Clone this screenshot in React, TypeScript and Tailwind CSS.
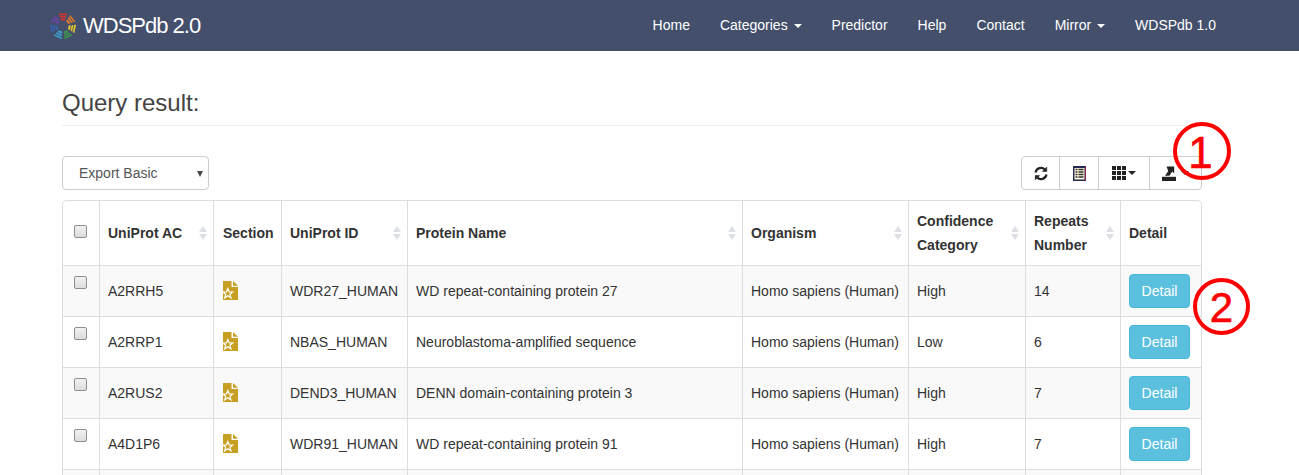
import React from "react";

const rows = [
  { ac: "A2RRH5", id: "WDR27_HUMAN", name: "WD repeat-containing protein 27", conf: "High", rep: "14" },
  { ac: "A2RRP1", id: "NBAS_HUMAN", name: "Neuroblastoma-amplified sequence", conf: "Low", rep: "6" },
  { ac: "A2RUS2", id: "DEND3_HUMAN", name: "DENN domain-containing protein 3", conf: "High", rep: "7" },
  { ac: "A4D1P6", id: "WDR91_HUMAN", name: "WD repeat-containing protein 91", conf: "High", rep: "7" },
];

const Caret = () => (
  <span className="ml-[2px] inline-block align-middle w-0 h-0 border-x-4 border-x-transparent border-t-4 border-t-current" />
);

const Logo = () => {
  const colors = ["#d9342b", "#e0782a", "#e8c62e", "#3f9a4b", "#3c9fd0", "#3a62b0", "#6a45a5"];
  return (
    <svg width="28" height="28" viewBox="-14 -14 28 28" className="mr-[6px]">
      {colors.map((c, i) => (
        <g key={c} transform={`rotate(${(i * 360) / 7})`} fill={c}>
          <path d="M-4.5 -12.5 H4.5 L3.6 -10.8 H-3.6 Z" />
          <path d="M-3.4 -10 H3.4 L2.8 -8.4 H-2.8 Z" />
          <path d="M-2.5 -7.6 H2.5 L1.8 -5.5 H-1.8 Z" />
        </g>
      ))}
    </svg>
  );
};

const SortIcon = () => (
  <span className="absolute right-[6px] top-1/2 -translate-y-1/2 flex flex-col gap-[2px]">
    <span className="w-0 h-0 border-x-[4.5px] border-x-transparent border-b-[6px] border-b-[#dcdfe3]" />
    <span className="w-0 h-0 border-x-[4.5px] border-x-transparent border-t-[6px] border-t-[#dcdfe3]" />
  </span>
);

const SectionIcon = () => (
  <svg width="15" height="19" viewBox="0 0 15 19" className="ml-px -mt-px block">
    <path d="M0 0H8.5V6H15V19H0Z" fill="#c79f23" />
    <path d="M10 0L15 4.8H10Z" fill="#c79f23" />
    <path
      d="M4.8 7.5L6.2 11H9.6L6.9 13.2L7.9 16.8L4.8 14.8L1.7 16.8L2.7 13.2L0 11H3.4Z"
      fill="#c79f23"
      stroke="#ffffff"
      strokeWidth="1.2"
    />
  </svg>
);

const Checkbox = () => (
  <span className="ml-[3px] block w-[13px] h-[13px] rounded-[2px] border border-[#8e8e8e] bg-gradient-to-b from-[#f2f2f2] to-[#dcdcdc]" />
);

const th = "relative border border-[#dddddd] px-2 py-2 text-left align-middle font-bold leading-[24px]";
const td = "border border-[#dddddd] px-2 align-middle";

export default function App() {
  return (
    <div className="relative h-[475px] w-[1299px] overflow-hidden bg-white font-['Liberation_Sans',Arial,sans-serif] text-[14px] text-[#333333]">
      <nav className="flex h-[51px] items-center justify-between bg-[#434f6b] pl-[49px] pr-[83px] text-white">
        <div className="flex items-center">
          <Logo />
          <span className="text-[22px] tracking-[-1px]">WDSPdb 2.0</span>
        </div>
        <ul className="flex gap-[30px]">
          <li>Home</li>
          <li>Categories <Caret /></li>
          <li>Predictor</li>
          <li>Help</li>
          <li>Contact</li>
          <li>Mirror <Caret /></li>
          <li>WDSPdb 1.0</li>
        </ul>
      </nav>

      <main className="mx-[62px] w-[1140px]">
        <h1 className="mt-[39px] border-b border-[#eeeeee] pb-[9px] text-[24px] leading-[26px] text-[#444444]">Query result:</h1>

        <div className="mt-[30px] flex items-center justify-between">
          <div className="relative flex h-[34px] w-[147px] items-center rounded border border-[#cccccc] pl-4 text-[#555555]">
            Export Basic
            <span className="absolute right-[5px] top-[14px] w-0 h-0 border-x-[3.5px] border-x-transparent border-t-[6px] border-t-[#444444]" />
          </div>
          <div className="flex h-[34px] divide-x divide-[#cccccc] rounded border border-[#cccccc] text-[#222222]">
            <div className="flex w-[38px] items-center justify-center">
              <svg width="14" height="15" viewBox="0 0 14 14" fill="none" stroke="currentColor" strokeWidth="2.2">
                <path d="M1.5 6A5.5 5.5 0 0 1 11 3.2" />
                <path d="M12.5 8A5.5 5.5 0 0 1 3 10.8" />
                <path d="M12.8 0.5V5H8.3Z" fill="currentColor" strokeWidth="0.5" />
                <path d="M1.2 13.5V9H5.7Z" fill="currentColor" strokeWidth="0.5" />
              </svg>
            </div>
            <div className="flex w-[39px] items-center justify-center">
              <svg width="13" height="15" viewBox="0 0 13 15">
                <rect x="0" y="0" width="13" height="15" fill="#8a2045" />
                <rect x="0" y="0" width="12" height="15" fill="#232b55" />
                <rect x="1.5" y="2" width="10" height="11.5" fill="#fdf6dc" />
                <path d="M2.5 3.5H4.5M5.5 3.5H10.5M2.5 6H4.5M5.5 6H10.5M2.5 8.5H4.5M5.5 8.5H10.5M2.5 11H4.5M5.5 11H10.5" stroke="#333" strokeWidth="1.4" />
              </svg>
            </div>
            <div className="flex w-[51px] items-center justify-center">
              <svg width="14" height="14" viewBox="0 0 14 14" fill="currentColor">
                <path d="M0 0h4v4H0zM5 0h4v4H5zM10 0h4v4h-4zM0 5h4v4H0zM5 5h4v4H5zM10 5h4v4h-4zM0 10h4v4H0zM5 10h4v4H5zM10 10h4v4h-4z" />
              </svg>
              <Caret />
            </div>
            <div className="flex w-[51px] items-center justify-center gap-[3px]">
              <svg width="14" height="15" viewBox="0 0 14 15" fill="currentColor">
                <path d="M0 10.8H14V15H0Z" />
                <path d="M3 9.8L6.2 5.2L4.6 0.6H12.2V7.4L10.2 5.6L7.4 9.8Z" />
              </svg>
              <Caret />
            </div>
          </div>
        </div>

        <div className="mt-[10px] overflow-hidden rounded border border-[#dddddd]">
          <table className="w-[1140px] table-fixed border-collapse -m-px">
            <colgroup>
              <col className="w-[37px]" />
              <col className="w-[114px]" />
              <col className="w-[68px]" />
              <col className="w-[126px]" />
              <col className="w-[335px]" />
              <col className="w-[166px]" />
              <col className="w-[117px]" />
              <col className="w-[95px]" />
              <col className="w-[82px]" />
            </colgroup>
            <thead>
              <tr className="h-[65px]">
                <th className={th}><div className="-mt-[4px]"><Checkbox /></div></th>
                <th className={th}>UniProt AC<SortIcon /></th>
                <th className={`${th} pl-[9px]`}>Section</th>
                <th className={th}>UniProt ID<SortIcon /></th>
                <th className={th}>Protein Name<SortIcon /></th>
                <th className={th}>Organism<SortIcon /></th>
                <th className={th}>Confidence Category<SortIcon /></th>
                <th className={th}>Repeats Number<SortIcon /></th>
                <th className={th}>Detail</th>
              </tr>
            </thead>
            <tbody>
              {rows.map((r, i) => (
                <tr key={r.ac} className={i % 2 === 0 ? "h-[51px] bg-[#f9f9f9]" : "h-[51px] bg-white"}>
                  <td className={td}>
                    <div className="-mt-[15px]"><Checkbox /></div>
                  </td>
                  <td className={td}>{r.ac}</td>
                  <td className={td}><SectionIcon /></td>
                  <td className={td}>{r.id}</td>
                  <td className={td}>{r.name}</td>
                  <td className={td}>Homo sapiens (Human)</td>
                  <td className={td}>{r.conf}</td>
                  <td className={td}>{r.rep}</td>
                  <td className={td}>
                    <button className="-mr-1 h-[34px] w-[61px] rounded bg-[#5bc0de] text-white border border-[#46b8da]">Detail</button>
                  </td>
                </tr>
              ))}
              {/* next row only starts at the bottom edge of the page */}
              <tr className="h-[51px] bg-[#f9f9f9]">
                {Array.from({ length: 9 }).map((_, i) => (
                  <td key={i} className={td} />
                ))}
              </tr>
            </tbody>
          </table>
        </div>
      </main>

      {/* red numbered annotations drawn on top of the screenshot */}
      <div className="absolute left-[1173px] top-[122px] flex h-[58px] w-[58px] items-center justify-center rounded-full border-[4px] border-[#ff0000] pt-[3px] pr-[3px] text-[44px] leading-none text-[#ff0000] [-webkit-text-stroke:0.6px_#ff0000]">1</div>
      <div className="absolute left-[1193px] top-[278px] flex h-[57px] w-[57px] items-center justify-center rounded-full border-[4px] border-[#ff0000] pt-[2px] text-[42px] leading-none text-[#ff0000] [-webkit-text-stroke:0.6px_#ff0000]">2</div>
    </div>
  );
}
